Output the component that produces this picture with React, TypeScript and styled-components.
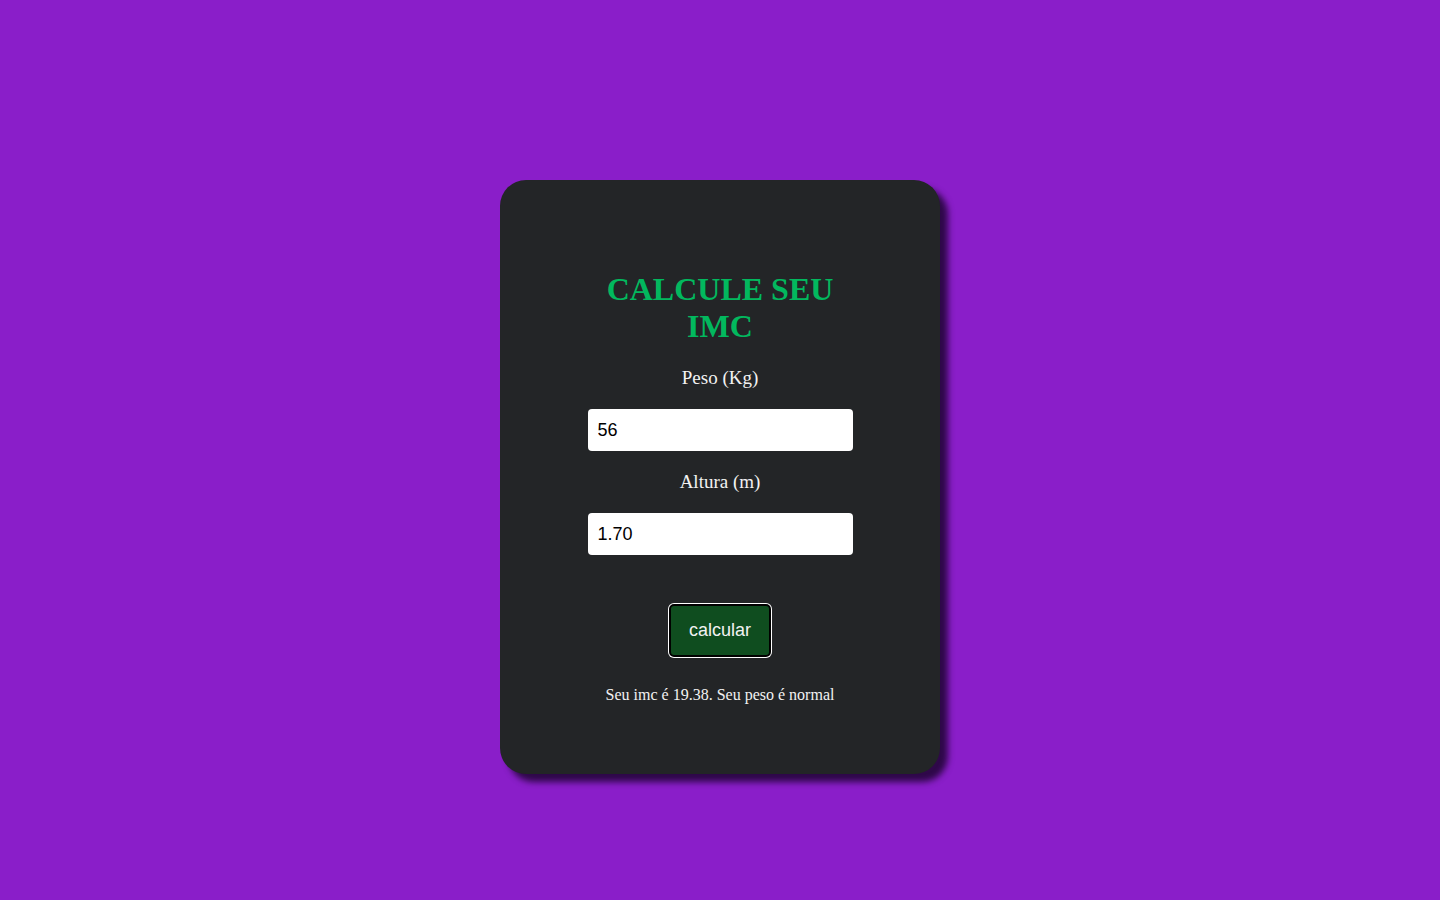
import { FC, useState } from 'react';

// ** Libs
import styled, { createGlobalStyle } from 'styled-components';

const GlobalStyle = createGlobalStyle`
  * {
    box-sizing: border-box;
  }

  body {
    margin: 0;
    background-color: #8a1ec9;
    font-family: 'Liberation Serif', 'Times New Roman', serif;
  }
`;

const Page = styled.main`
  display: flex;
  justify-content: center;
  min-height: 100vh;
  padding-top: 180px;
`;

const Card = styled.section`
  display: flex;
  flex-direction: column;
  align-items: center;
  width: 440px;
  height: 594px;
  padding-top: 91px;
  background-color: #232527;
  border-radius: 26px;
  box-shadow: 8px 8px 6px rgba(30, 5, 50, 0.85);
`;

const Title = styled.h1`
  width: 265px;
  margin: 0 0 22px;
  font-size: 32px;
  line-height: 37px;
  font-weight: bold;
  text-align: center;
  color: #02b85e;
`;

const Label = styled.label`
  font-size: 19px;
  line-height: 22px;
  color: #f2f2f2;
`;

const Input = styled.input<{ $last?: boolean }>`
  width: 265px;
  height: 42px;
  margin: 20px 0 ${({ $last }) => ($last ? '48px' : '20px')};
  padding: 0 10px;
  border: none;
  border-radius: 4px;
  outline: none;
  background-color: #ffffff;
  color: #000;
  font-family: 'Liberation Sans', Arial, sans-serif;
  font-size: 18px;
`;

const Button = styled.button`
  width: 102px;
  height: 53px;
  margin: 1px 0 29px;
  border: 2px solid #000;
  border-radius: 5px;
  box-shadow: 0 0 0 1px #fff;
  background-color: #0f4d1f;
  color: #f2f2f2;
  font-family: 'Liberation Sans', Arial, sans-serif;
  font-size: 18px;
  cursor: pointer;
`;

const Result = styled.p`
  margin: 0;
  font-size: 16px;
  line-height: 18px;
  color: #f2f2f2;
`;

const getStatus = (imc: number) => {
  if (imc < 18.5) return 'abaixo do normal';
  if (imc < 25) return 'normal';
  if (imc < 30) return 'acima do normal';
  return 'obesidade';
};

const App: FC = () => {
  const [peso, setPeso] = useState('56');
  const [altura, setAltura] = useState('1.70');
  const [result, setResult] = useState('Seu imc é 19.38. Seu peso é normal');

  const onCalcular = () => {
    const imc = Number(peso) / (Number(altura) * Number(altura));
    if (!isFinite(imc)) return;
    setResult(`Seu imc é ${imc.toFixed(2)}. Seu peso é ${getStatus(imc)}`);
  };

  return (
    <>
      <GlobalStyle />
      <Page>
        <Card>
          <Title>CALCULE SEU IMC</Title>

          <Label htmlFor="peso">Peso (Kg)</Label>
          <Input id="peso" value={peso} onChange={(e) => setPeso(e.target.value)} />

          <Label htmlFor="altura">Altura (m)</Label>
          <Input id="altura" $last value={altura} onChange={(e) => setAltura(e.target.value)} />

          <Button type="button" onClick={onCalcular}>
            calcular
          </Button>

          <Result>{result}</Result>
        </Card>
      </Page>
    </>
  );
};

export default App;
